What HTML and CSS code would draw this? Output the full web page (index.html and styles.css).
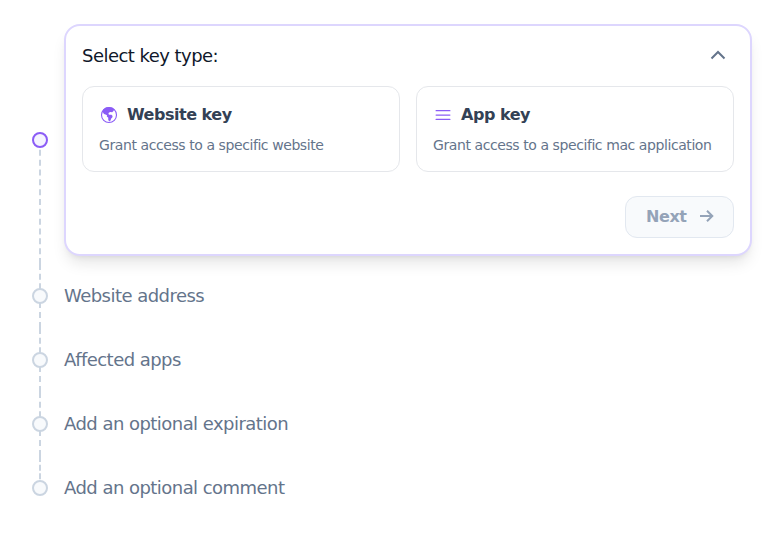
FILE: index.html
```html
<!DOCTYPE html>
<html lang="en">
<head>
<meta charset="utf-8">
<title>Create key</title>
<link rel="stylesheet" href="styles.css">
</head>
<body>
<ol class="steps">
  <li class="step step-active">
    <div class="rail"><i class="line line-none"></i><i class="line"></i><span class="dot"></span></div>
    <section class="card">
      <header class="card-head">
        <h2>Select key type:</h2>
        <svg class="chevron" viewBox="0 0 20 20"><path d="M3.500 12.500 10 6l6.500 6.500"/></svg>
      </header>
      <div class="options">
        <div class="option">
          <h3><svg class="icon" viewBox="0 0 20 20"><circle cx="10" cy="10" r="7.5" fill="none" stroke="currentColor" stroke-width="1.1"/><path fill="currentColor" d="M3.200 6.500 4.800 4 7 2.500 10 2 13.500 2.800 15.300 4.300 14.500 6 13.200 7.200 11.200 6.900 9.800 7.800 9.400 9 10.300 9.800 12.500 9.700 13.600 10.900 13.300 12.500 12.200 13.500 11.400 15.800 10 16.500 9.200 14.500 9.300 12.800 7.800 11.600 8 10.200 6.500 9.400 5 8.900 4 7.600Z"/></svg>Website key</h3>
          <p>Grant access to a specific website</p>
        </div>
        <div class="option">
          <h3><svg class="icon" viewBox="0 0 20 20"><path fill="none" stroke="currentColor" stroke-width="1.25" stroke-linecap="round" d="M3.125 5.625h13.750M3.125 10h13.750M3.125 14.375h13.750"/></svg>App key</h3>
          <p>Grant access to a specific mac application</p>
        </div>
      </div>
      <footer class="card-foot">
        <button class="next" disabled>Next<svg class="arrow" viewBox="0 0 18 18"><path d="M2 8H14.300M9 2.700l5.300 5.300L9 13.300"/></svg></button>
      </footer>
    </section>
  </li>
  <li class="step"><div class="rail"><i class="line"></i><i class="line"></i><span class="dot"></span></div><span class="label">Website address</span></li>
  <li class="step"><div class="rail"><i class="line"></i><i class="line"></i><span class="dot"></span></div><span class="label">Affected apps</span></li>
  <li class="step"><div class="rail"><i class="line"></i><i class="line"></i><span class="dot"></span></div><span class="label">Add an optional expiration</span></li>
  <li class="step"><div class="rail"><i class="line"></i><i class="line line-none"></i><span class="dot"></span></div><span class="label">Add an optional comment</span></li>
</ol>
</body>
</html>
```

FILE: styles.css
```css
* { box-sizing: border-box; margin: 0; padding: 0; }
body { background: #fff; color: #64748b; font-family: "DejaVu Sans", sans-serif; letter-spacing: -0.03em; }
.steps { list-style: none; padding: 16px 16px 0 32px; }
.step { display: flex; gap: 16px; min-height: 64px; align-items: center; }
.rail { position: relative; width: 16px; align-self: stretch; flex: none; display: flex; flex-direction: column; align-items: center; }
.line { flex: 1; width: 0; border-left: 2px dashed #cbd5e1; }
.step:not(.step-active):not(:last-child) .line { flex: none; height: 35px; }
.step:not(.step-active):not(:last-child) .line + .line { height: 36px; margin-top: -7px; }
.line-none { border-color: transparent; }
.dot { position: absolute; top: calc(50% - 8px); left: 0; width: 16px; height: 16px; border: 2px solid #cbd5e1; border-radius: 50%; background: #f8fafc; }
.step-active .dot { border-color: #8b5cf6; background: #f5f3ff; }
.label { font-size: 18px; line-height: 28px; letter-spacing: -0.03em; }
.card { flex: 1; height: 232px; margin: 8px 0; padding: 16px; border: 2px solid #ddd6fe; border-radius: 16px; background: #fff; box-shadow: 0 10px 15px -3px rgba(0,0,0,.1), 0 4px 6px -4px rgba(0,0,0,.1); }
.card-head { display: flex; justify-content: space-between; align-items: center; height: 28px; }
h2 { font-size: 18px; line-height: 28px; font-weight: 400; letter-spacing: -0.03em; color: #0f172a; }
.chevron { width: 20px; height: 20px; margin-right: 6px; }
.chevron path, .arrow path { fill: none; stroke: #64748b; stroke-width: 2; }
.options { display: grid; grid-template-columns: 1fr 1fr; gap: 16px; margin-top: 16px; }
.option { height: 86px; padding: 16px; border: 1px solid #e5e7eb; border-radius: 12px; }
h3 { display: flex; align-items: center; gap: 8px; font-size: 16px; line-height: 24px; letter-spacing: -0.03em; color: #334155; }
.icon { width: 20px; height: 20px; color: #8b5cf6; }
.option p { margin-top: 8px; font-size: 14px; line-height: 20px; letter-spacing: -0.03em; white-space: nowrap; }
.card-foot { display: flex; justify-content: flex-end; margin-top: 24px; }
.next { display: flex; align-items: center; justify-content: space-between; width: 109px; height: 42px; padding: 0 17px 0 20px; border: 1px solid #e2e8f0; border-radius: 12px; background: #f8fafc; color: #94a3b8; font: 700 16px/24px "DejaVu Sans", sans-serif; letter-spacing: -0.4px; }
.arrow { width: 18px; height: 18px; }
.arrow path { stroke: #94a3b8; }
```
